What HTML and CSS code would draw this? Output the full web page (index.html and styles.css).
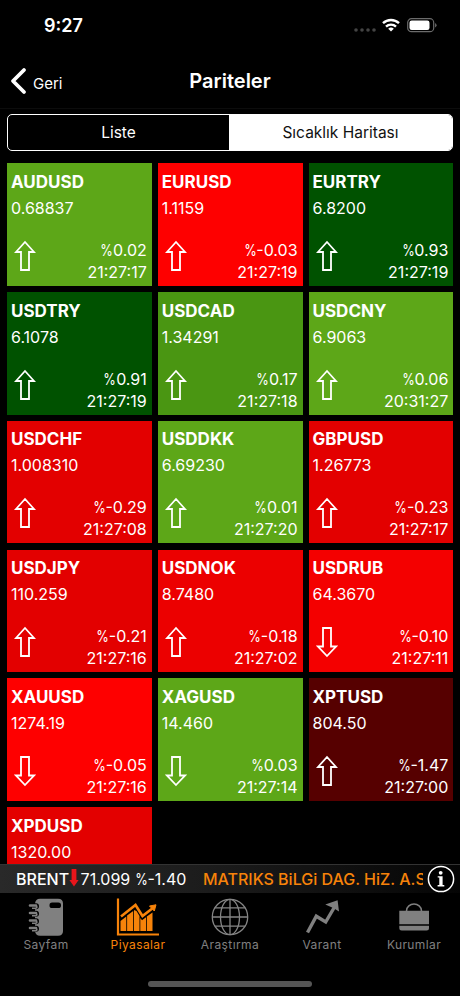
FILE: index.html
```
<!DOCTYPE html>
<html lang="tr">
  <head>
    <meta charset="UTF-8" />
    <meta name="viewport" content="width=device-width, initial-scale=1.0" />
    <title>Pariteler</title>
    <link rel="stylesheet" href="styles.css">
  </head>
  <body>
    <svg class="symbols" width="0" height="0">
      <symbol id="up" viewBox="0 0 22 32">
        <path d="M11 2 L20 12 H15 V30 H7 V12 H2 Z" />
      </symbol>
      <symbol id="down" viewBox="0 0 22 32">
        <path d="M11 30 L20 20.5 H15 V2 H7 V20.5 H2 Z" />
      </symbol>
    </svg>

    <div class="status">
      <span class="clock">9:27</span>
      <div class="status-icons">
        <svg width="22" height="4" viewBox="0 0 22 4">
          <g fill="#444">
            <circle cx="2" cy="2" r="1.8" />
            <circle cx="8" cy="2" r="1.8" />
            <circle cx="14" cy="2" r="1.8" />
            <circle cx="20" cy="2" r="1.8" />
          </g>
        </svg>
        <svg class="wifi" width="18" height="14" viewBox="0 0 18 14">
          <g fill="none" stroke="#fff" stroke-width="2.4">
            <path d="M1 5.2 A11.5 11.5 0 0 1 17 5.2" />
            <path d="M4 8.6 A7.2 7.2 0 0 1 14 8.6" />
          </g>
          <path d="M6.2 10.8 A4.2 4.2 0 0 1 11.8 10.8 L9 13.6 Z" fill="#fff" />
        </svg>
        <svg class="battery" width="30" height="15" viewBox="0 0 30 15">
          <rect x="0.7" y="0.7" width="26" height="13" rx="3.8" fill="none" stroke="#6b6b6b" stroke-width="1.2" />
          <rect x="2.5" y="2.5" width="20" height="9.5" rx="2.2" fill="#fff" />
          <path d="M28.2 5 A2.7 2.7 0 0 1 28.2 9.6 Z" fill="#777" />
        </svg>
      </div>
    </div>

    <header class="navbar">
      <a class="back" href="#">
        <svg width="17" height="28" viewBox="0 0 17 28">
          <path d="M14 3 L3 14 L14 25" />
        </svg>
        <span>Geri</span>
      </a>
      <h1>Pariteler</h1>
    </header>

    <div class="segments">
      <button class="segment">Liste</button>
      <button class="segment active">Sıcaklık Haritası</button>
    </div>

    <main class="heatmap">
      <article class="tile green">
        <h2>AUDUSD</h2>
        <p class="price">0.68837</p>
        <div class="change">
          <svg><use href="#up" /></svg>
          <p><span class="pct">%</span>0.02<br />21:27:17</p>
        </div>
      </article>
      <article class="tile red">
        <h2>EURUSD</h2>
        <p class="price">1.1159</p>
        <div class="change">
          <svg><use href="#up" /></svg>
          <p><span class="pct">%</span>-0.03<br />21:27:19</p>
        </div>
      </article>
      <article class="tile green-dark">
        <h2>EURTRY</h2>
        <p class="price">6.8200</p>
        <div class="change">
          <svg><use href="#up" /></svg>
          <p><span class="pct">%</span>0.93<br />21:27:19</p>
        </div>
      </article>
      <article class="tile green-dark">
        <h2>USDTRY</h2>
        <p class="price">6.1078</p>
        <div class="change">
          <svg><use href="#up" /></svg>
          <p><span class="pct">%</span>0.91<br />21:27:19</p>
        </div>
      </article>
      <article class="tile green-mid">
        <h2>USDCAD</h2>
        <p class="price">1.34291</p>
        <div class="change">
          <svg><use href="#up" /></svg>
          <p><span class="pct">%</span>0.17<br />21:27:18</p>
        </div>
      </article>
      <article class="tile green">
        <h2>USDCNY</h2>
        <p class="price">6.9063</p>
        <div class="change">
          <svg><use href="#up" /></svg>
          <p><span class="pct">%</span>0.06<br />20:31:27</p>
        </div>
      </article>
      <article class="tile red-low">
        <h2>USDCHF</h2>
        <p class="price">1.008310</p>
        <div class="change">
          <svg><use href="#up" /></svg>
          <p><span class="pct">%</span>-0.29<br />21:27:08</p>
        </div>
      </article>
      <article class="tile green">
        <h2>USDDKK</h2>
        <p class="price">6.69230</p>
        <div class="change">
          <svg><use href="#up" /></svg>
          <p><span class="pct">%</span>0.01<br />21:27:20</p>
        </div>
      </article>
      <article class="tile red-low">
        <h2>GBPUSD</h2>
        <p class="price">1.26773</p>
        <div class="change">
          <svg><use href="#up" /></svg>
          <p><span class="pct">%</span>-0.23<br />21:27:17</p>
        </div>
      </article>
      <article class="tile red-low">
        <h2>USDJPY</h2>
        <p class="price">110.259</p>
        <div class="change">
          <svg><use href="#up" /></svg>
          <p><span class="pct">%</span>-0.21<br />21:27:16</p>
        </div>
      </article>
      <article class="tile red-mid">
        <h2>USDNOK</h2>
        <p class="price">8.7480</p>
        <div class="change">
          <svg><use href="#up" /></svg>
          <p><span class="pct">%</span>-0.18<br />21:27:02</p>
        </div>
      </article>
      <article class="tile red-high">
        <h2>USDRUB</h2>
        <p class="price">64.3670</p>
        <div class="change">
          <svg><use href="#down" /></svg>
          <p><span class="pct">%</span>-0.10<br />21:27:11</p>
        </div>
      </article>
      <article class="tile red">
        <h2>XAUUSD</h2>
        <p class="price">1274.19</p>
        <div class="change">
          <svg><use href="#down" /></svg>
          <p><span class="pct">%</span>-0.05<br />21:27:16</p>
        </div>
      </article>
      <article class="tile green">
        <h2>XAGUSD</h2>
        <p class="price">14.460</p>
        <div class="change">
          <svg><use href="#down" /></svg>
          <p><span class="pct">%</span>0.03<br />21:27:14</p>
        </div>
      </article>
      <article class="tile red-dark">
        <h2>XPTUSD</h2>
        <p class="price">804.50</p>
        <div class="change">
          <svg><use href="#up" /></svg>
          <p><span class="pct">%</span>-1.47<br />21:27:00</p>
        </div>
      </article>
      <article class="tile red-low">
        <h2>XPDUSD</h2>
        <p class="price">1320.00</p>
      </article>
    </main>

    <div class="ticker">
      <div class="ticker-text">
        <span class="symbol">BRENT</span>
        <svg width="10" height="18" viewBox="0 0 10 18">
          <path d="M2.6 0 H7.4 V11 H9.6 L5 17.5 L0.4 11 H2.6 Z" fill="#e8151b" />
        </svg>
        <span class="quote">71.099 <span class="pct">%</span>-1.40</span>
        <span class="provider">MATRIKS BiLGi DAG. HiZ. A.S.</span>
      </div>
      <svg class="info" width="28" height="28" viewBox="0 0 28 28">
        <circle cx="14" cy="14" r="12.6" fill="#000" stroke="#fff" stroke-width="1.5" />
        <circle cx="13.7" cy="7.8" r="1.9" fill="#fff" />
        <path d="M10.7 11.3 H15.6 V20 H17.3 V21.4 H10.6 V20 H12.3 V12.6 H10.7 Z" fill="#fff" />
      </svg>
    </div>

    <nav class="tabs">
      <a class="tab" href="#">
        <svg width="38" height="38" viewBox="0 0 38 38">
          <path d="M13 0.7 H31 Q36 0.7 36 5.5 V33 Q36 37.7 31 37.7 H13 Q8.5 37.7 8 33 V5.5 Q8.5 0.7 13 0.7 Z" fill="#808080" />
          <rect x="22.5" y="4.5" width="11.5" height="5.6" rx="2.6" fill="#000" />
          <g stroke="#000" stroke-width="6" stroke-linecap="round">
            <path d="M6 8.3 H9 M6 15.8 H9 M6 23.3 H9 M6 30.8 H9" />
          </g>
          <g fill="none" stroke="#808080" stroke-width="2.6" stroke-linecap="round">
            <path d="M3 7.5 H9 M3 15 H9 M3 22.5 H9 M3 30 H9" />
          </g>
          <!-- binder rings -->
          <g fill="none" stroke="#808080" stroke-width="1.6">
            <path d="M5 10.3 H8.5 Q11 9.6 9 7.5 M5 17.8 H8.5 Q11 17.1 9 15 M5 25.3 H8.5 Q11 24.6 9 22.5 M5 32.8 H8.5 Q11 32.1 9 30" />
          </g>
        </svg>
        <span>Sayfam</span>
      </a>
      <a class="tab active" href="#">
        <svg width="44" height="38" viewBox="0 0 44 38">
          <path d="M2 0.5 V36.5 H43" fill="none" stroke="#f7830a" stroke-width="2.2" />
          <path d="M5 18.5 L19.5 7 L26.5 18 L37.5 9.5" fill="none" stroke="#f7830a" stroke-width="2.6" />
          <path d="M33.5 8 L40 6.8 L38.3 13 Z" fill="#f7830a" stroke="#f7830a" />
          <path d="M4.5 33 V23 L10.3 18.5 V33 Z M11.1 33 V17.5 L17.2 13 V33 Z M18 33 V12 L20.5 13 L23.5 18 V33 Z M24.3 33 V20 L26 22.2 L30 19.3 V33 Z M30.8 33 V18.5 L36.5 14.5 V33 Z" fill="#f7830a" />
        </svg>
        <span>Piyasalar</span>
      </a>
      <a class="tab" href="#">
        <svg width="38" height="38" viewBox="0 0 38 38">
          <g fill="none" stroke="#858585" stroke-width="1.3">
            <circle cx="19" cy="19" r="17.7" />
            <ellipse cx="19" cy="19" rx="9.5" ry="17.7" />
            <path d="M19 1.3 V36.7 M1.3 19 H36.7 M3.8 9.8 H34.2 M3.8 28.2 H34.2" />
          </g>
        </svg>
        <span>Araştırma</span>
      </a>
      <a class="tab" href="#">
        <svg width="38" height="38" viewBox="0 0 38 38">
          <path d="M4.5 34.5 L13.3 18.2 L22.7 24 L31.5 9" fill="none" stroke="#808080" stroke-width="3.4" />
          <path d="M22.3 6.5 L34.6 2.3 L36 13.5 L30.8 10.2 Z" fill="#808080" />
        </svg>
        <span>Varant</span>
      </a>
      <a class="tab" href="#">
        <svg width="38" height="38" viewBox="0 0 38 38">
          <path d="M11.5 13 C11.5 3.8 26.5 3.8 26.5 13" fill="none" stroke="#808080" stroke-width="1.5" />
          <path d="M4.3 12.7 H34 V26.3 H4.3 Z M4.3 27.8 H34 V30 Q34 32.5 31.5 32.5 H6.8 Q4.3 32.5 4.3 30 Z" fill="#808080" />
        </svg>
        <span>Kurumlar</span>
      </a>
    </nav>
    <div class="home-indicator"></div>
  </body>
</html>
```
FILE: styles.css
```
* {
  box-sizing: border-box;
}
body {
  margin: 0;
  height: 996px;
  display: flex;
  flex-direction: column;
  overflow: hidden;
  background-color: #000;
  font-family: Inter, "Liberation Sans", sans-serif;
  color: white;
}
h1,
h2,
p {
  margin: 0;
}
a {
  color: inherit;
  text-decoration: none;
}
.symbols {
  position: absolute;
}
.status {
  flex: none;
  height: 50px;
  padding: 0 23px 0 44px;
  display: flex;
  justify-content: space-between;
  align-items: center;
}
.clock {
  font-size: 18px;
  font-weight: 600;
}
.status-icons {
  display: flex;
  align-items: center;
}
.status-icons svg:first-child {
  margin: 9px 6px 0 0;
}
.wifi {
  margin-right: 7px;
}
.navbar {
  flex: none;
  height: 59px;
  padding-top: 4px;
  display: grid;
  grid-template-columns: 1fr auto 1fr;
  align-items: center;
  border-bottom: 1px solid #0c0c0c;
}
.back {
  display: flex;
  align-items: center;
  gap: 6px;
  padding-left: 10px;
  font-size: 15px;
}
.back span {
  padding-top: 4px;
}
.back path {
  fill: none;
  stroke: white;
  stroke-width: 3.8;
  stroke-linecap: round;
  stroke-linejoin: round;
}
h1 {
  font-size: 20px;
  font-weight: 600;
}
.segments {
  flex: none;
  display: flex;
  height: 37px;
  margin: 5px 7px 0;
  border: 1.5px solid white;
  border-radius: 5px;
  overflow: hidden;
}
.segment {
  width: 221px;
  padding: 0;
  border: none;
  background: transparent;
  font-family: inherit;
  font-size: 15.5px;
  color: white;
}
.segment.active {
  flex: 1;
  background-color: white;
  color: #111;
}
.heatmap {
  flex: none;
  height: 713px;
  padding: 12.3px 6.7px 0 7px;
  display: grid;
  grid-template-columns: repeat(3, 1fr);
  grid-auto-rows: 122.5px;
  gap: 6.3px 6px;
  overflow: hidden;
}
.tile {
  padding: 5.5px 5px 3px 4px;
  display: flex;
  flex-direction: column;
}
.tile h2 {
  font-size: 17px;
  font-weight: 650;
  line-height: 26px;
}
.tile p {
  font-size: 16px;
  line-height: 22px;
}
.tile .price {
  line-height: 26px;
}
.pct {
  display: inline-block;
  margin-left: -3px;
  transform: scaleX(0.8);
  transform-origin: right;
}
.change {
  margin-top: auto;
  display: flex;
  justify-content: space-between;
  align-items: flex-end;
  text-align: right;
}
.change svg {
  width: 22px;
  height: 32px;
  margin: 0 0 11px 3px;
  fill: none;
  stroke: white;
  stroke-width: 1.8;
}
.green {
  background-color: #5da718;
}
.green-mid {
  background-color: #4a9612;
}
.green-dark {
  background-color: #005200;
}
.red {
  background-color: #fe0000;
}
.red-high {
  background-color: #f40000;
}
.red-mid {
  background-color: #ec0000;
}
.red-low {
  background-color: #e30000;
}
.red-dark {
  background-color: #560000;
}
.ticker {
  flex: none;
  height: 29px;
  padding: 0 5px 0 16px;
  display: flex;
  justify-content: space-between;
  align-items: center;
  background: linear-gradient(90deg, #292929, #1c1c1c 45%, #050505);
  border-top: 1px solid #333;
}
.ticker-text {
  width: 407px;
  display: flex;
  align-items: center;
  overflow: hidden;
  white-space: nowrap;
  font-size: 16px;
}
.ticker-text svg {
  flex: none;
  margin-top: -3px;
}
.symbol {
  font-weight: 500;
}
.quote {
  margin-left: 1.5px;
}
.info {
  flex: none;
}
.provider {
  margin-left: 16.5px;
  font-weight: 500;
  color: #f7830a;
}
.tabs {
  flex: none;
  height: 70px;
  padding-top: 5px;
  display: grid;
  grid-template-columns: repeat(5, 1fr);
}
.tab {
  display: flex;
  flex-direction: column;
  align-items: center;
  font-size: 12px;
  font-weight: 400;
  letter-spacing: 0.4px;
  line-height: 18px;
  color: #808080;
}
.tab.active {
  color: #f7830a;
}
.home-indicator {
  flex: none;
  width: 164px;
  height: 6px;
  margin: 18px auto 0;
  border-radius: 3px;
  background-color: #555;
}
```
